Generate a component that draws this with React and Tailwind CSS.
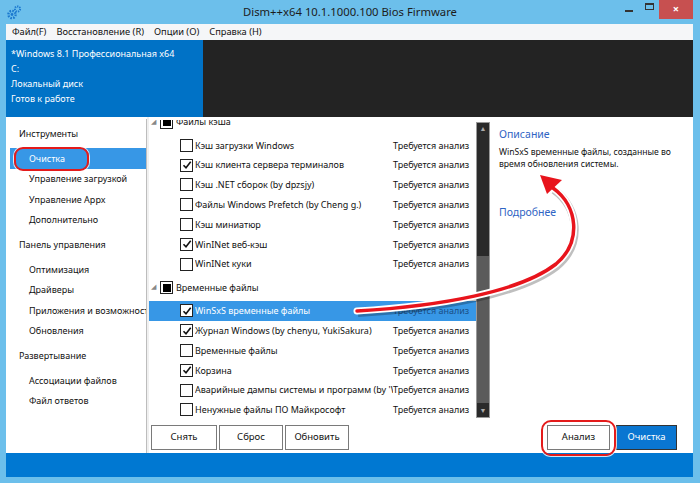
import React from 'react'

const font = { fontFamily: '"Noto Sans", "Open Sans", sans-serif' }

function Check({ checked, mixed }) {
  return (
    <span className="w-[13px] h-[13px] border-[1.5px] border-[#222] bg-white flex items-center justify-center shrink-0">
      {mixed && <span className="w-[8px] h-[8px] bg-black" />}
      {checked && (
        <svg width="10" height="10" viewBox="0 0 10 10">
          <path d="M1.5 5.2 L4 7.8 L8.7 1.8" stroke="#111" strokeWidth="1.6" fill="none" />
        </svg>
      )}
    </span>
  )
}

function Group({ label }) {
  return (
    <div className="h-[27px] flex items-center text-[9px] text-[#111]">
      <span className="w-[11px] pl-[2px] text-[7px] text-[#888]">◢</span>
      <Check mixed />
      <span className="ml-[3px]">{label}</span>
    </div>
  )
}

function Item({ label, checked, selected }) {
  return (
    <div className={'h-[19.8px] flex items-center text-[9px] ' + (selected ? 'bg-[#3797e6] text-white' : 'text-[#111]')}>
      <span className="w-[31px] shrink-0" />
      <Check checked={checked} />
      <span className="ml-[2px] w-[198px] shrink-0 whitespace-nowrap overflow-hidden">{label}</span>
      <span className={'whitespace-nowrap ' + (selected ? 'text-[#1a4f86]' : '')}>Требуется анализ</span>
    </div>
  )
}

function NavHead({ label }) {
  return <div className="h-[29px] flex items-center pl-[13px] text-[9px] text-[#111]">{label}</div>
}

function NavItem({ label, selected }) {
  return (
    <div className={'h-[20.5px] flex items-center ml-[4px] pl-[19px] text-[9px] whitespace-nowrap overflow-hidden ' + (selected ? 'bg-[#3797e6] text-white' : 'text-[#111]')}>
      {label}
    </div>
  )
}

function Btn({ label, w, blue }) {
  return (
    <div className={'h-[25px] flex items-center justify-center text-[9.5px] border-[1.5px] ' + w + ' ' + (blue ? 'bg-[#0a76d1] text-white border-[#333]' : 'bg-white text-[#111] border-[#7a7a7a]')}>
      {label}
    </div>
  )
}

export default function App() {
  return (
    <div className="w-[700px] h-[483px] bg-[#6cbfeb] flex flex-col relative overflow-hidden" style={font}>
      {/* title bar */}
      <div className="h-[24px] grid grid-cols-[1fr_auto_1fr] items-center">
        <div className="pl-[7px]">
          <svg width="15" height="15" viewBox="0 0 15 15">
            <circle cx="5" cy="9.5" r="3.6" fill="none" stroke="#1b79cf" strokeWidth="2.4" strokeDasharray="1.6 1.2" />
            <circle cx="5" cy="9.5" r="1.4" fill="#1b79cf" />
            <circle cx="10.5" cy="4" r="2.6" fill="none" stroke="#1b79cf" strokeWidth="2" strokeDasharray="1.3 1" />
          </svg>
        </div>
        <div className="text-[11.3px] text-[#1c1c1c] pt-[1px]">Dism++x64 10.1.1000.100 Bios Firmware</div>
        <div className="flex justify-end items-start h-full pr-[7px]">
          <div className="w-[20px] h-[19px] flex items-center justify-center"><span className="w-[8px] h-[2px] bg-[#333] mt-[3px]" /></div>
          <div className="w-[20px] h-[19px] flex justify-center pt-[3px]"><span className="w-[9px] h-[7px] border border-[#333] border-t-2" /></div>
          <div className="w-[34px] h-[19px] bg-[#c75050] flex items-center justify-center text-white text-[11px] font-bold">×</div>
        </div>
      </div>

      <div className="ml-[6px] mr-[7px] flex flex-col">
        {/* menu */}
        <div className="h-[16px] bg-[#f5f6f8] flex items-center pl-[6px] gap-[10px] text-[9.3px] text-[#111]">
          <span>Файл(F)</span>
          <span>Восстановление (R)</span>
          <span>Опции (O)</span>
          <span>Справка (H)</span>
        </div>

        {/* info */}
        <div className="h-[77px] flex">
          <div className="w-[197px] bg-[#0072c6] text-white text-[9px] pl-[5px] pt-[6px] leading-[15px]">
            <div>*Windows 8.1 Профессиональная x64</div>
            <div>C:</div>
            <div>Локальный диск</div>
            <div>Готов к работе</div>
          </div>
          <div className="flex-1 bg-[#232323]" />
        </div>

        {/* content */}
        <div className="h-[336px] flex bg-white">
          <div className="w-[141px] mt-[2px] border-r border-[#bdbdbd] bg-white overflow-hidden">
            <NavHead label="Инструменты" />
            <NavItem label="Очистка" selected />
            <NavItem label="Управление загрузкой" />
            <NavItem label="Управление Appx" />
            <NavItem label="Дополнительно" />
            <NavHead label="Панель управления" />
            <NavItem label="Оптимизация" />
            <NavItem label="Драйверы" />
            <NavItem label="Приложения и возможности" />
            <NavItem label="Обновления" />
            <NavHead label="Развертывание" />
            <NavItem label="Ассоциации файлов" />
            <NavItem label="Файл ответов" />
          </div>
          <div className="w-[2px] bg-[#f0f0f0]" />

          <div className="w-[341px] flex flex-col pt-[3px]">
            <div className="h-[303px] flex">
              <div className="w-[327px] overflow-hidden">
                <div className="mt-[-11.5px]">
                  <Group label="Файлы кэша" />
                  <Item label="Кэш загрузки Windows" />
                  <Item label="Кэш клиента сервера терминалов" checked />
                  <Item label="Кэш .NET сборок (by dpzsjy)" />
                  <Item label="Файлы Windows Prefetch (by Cheng g.)" />
                  <Item label="Кэш миниатюр" />
                  <Item label="WinINet веб-кэш" checked />
                  <Item label="WinINet куки" />
                  <Group label="Временные файлы" />
                  <Item label="WinSxS временные файлы" checked selected />
                  <Item label="Журнал Windows (by chenyu, YukiSakura)" checked />
                  <Item label="Временные файлы" />
                  <Item label="Корзина" checked />
                  <Item label="Аварийные дампы системы и программ (by 'Windows)" />
                  <Item label="Ненужные файлы ПО Майкрософт" />
                </div>
              </div>
              <div className="w-[14px] mt-[2px] mb-[5px] bg-[#2a2a2a] border border-[#9a9a9a] flex flex-col items-center">
                <span className="text-[7px] text-[#aaa] leading-[12px]">▲</span>
                <div className="flex-1 w-full flex flex-col">
                  <div className="h-[121px]" />
                  <div className="h-[147px] bg-[#5b5b5b]" />
                </div>
                <span className="text-[7px] text-[#aaa] leading-[12px]">▼</span>
              </div>
            </div>
            <div className="flex gap-[2px] pl-[2px] pt-[2px]">
              <Btn label="Снять" w="w-[66px]" />
              <Btn label="Сброс" w="w-[64px]" />
              <Btn label="Обновить" w="w-[64px]" />
            </div>
          </div>

          <div className="flex-1 flex flex-col pl-[9px] pr-[10px] pt-[9px] pb-[3px] bg-white">
            <div className="text-[10.5px] text-[#2f64c4] leading-[16px]">Описание</div>
            <div className="text-[8.6px] text-[#111] leading-[12px] mt-[4px]">WinSxS временные файлы, созданные во время обновления системы.</div>
            <div className="text-[10.5px] text-[#2f64c4] leading-[16px] mt-[34px]">Подробнее</div>
            <div className="flex-1" />
            <div className="flex justify-end gap-[6px] pr-[6px]">
              <Btn label="Анализ" w="w-[63px]" />
              <Btn label="Очистка" w="w-[61px]" blue />
            </div>
          </div>
        </div>

        <div className="h-[24px] bg-[#0078d2]" />
      </div>

      {/* annotations */}
      <div className="absolute left-[14px] top-[147px] w-[75px] h-[24px] rounded-[9px] border-2 border-[#e41b1b] shadow-[0_0_0_1px_rgba(255,255,255,0.8)]" />
      <div className="absolute left-[541px] top-[420px] w-[75px] h-[36px] rounded-[10px] border-2 border-[#e41b1b] shadow-[0_0_0_1px_rgba(255,255,255,0.8)]" />
      <svg className="absolute left-0 top-0" width="700" height="483" viewBox="0 0 700 483">
        <path d="M357 311 C440 306 520 292 556 264 C582 242 578 206 553 188" stroke="rgba(0,0,0,0.25)" strokeWidth="8" fill="none" transform="translate(1,2)" />
        <path d="M357 311 C440 306 520 292 556 264 C582 242 578 206 553 188" stroke="#fff" strokeWidth="7" fill="none" strokeLinecap="round" />
        <polygon points="539,174 564,180 546,196" fill="#fff" stroke="#fff" strokeWidth="3" strokeLinejoin="round" />
        <path d="M357 311 C440 306 520 292 556 264 C582 242 578 206 553 188" stroke="#e8141c" strokeWidth="3.5" fill="none" strokeLinecap="round" />
        <polygon points="540,175 562,180 547,194" fill="#e8141c" />
      </svg>
    </div>
  )
}
